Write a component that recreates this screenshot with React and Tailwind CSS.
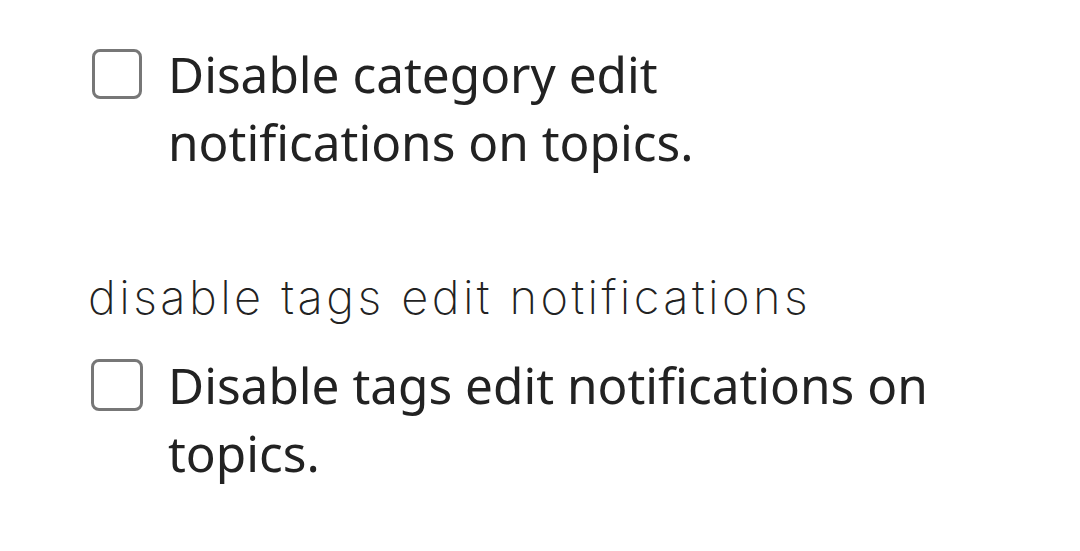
import React from 'react';

const Checkbox = ({ size = 'h-[50px] w-[50px]' }) => (
  <span className={`block shrink-0 rounded-[8px] border-[3.5px] border-[#777777] bg-white ${size}`} />
);

export default function App() {
  return (
    <div className="min-h-screen bg-white pt-[49px] text-[#222222]" style={{ fontFamily: '"Noto Sans", sans-serif' }}>
      {/* category edit notifications */}
      <label className="flex gap-[26px] pl-[92px]">
        <Checkbox />
        <span className="-mt-[9px] w-[780px] text-[49.5px] leading-[68px]">
          Disable category edit notifications on topics.
        </span>
      </label>

      {/* tags edit notifications */}
      <div className="mt-[91px]">
        <div className="pl-[88px] text-[47px] font-extralight leading-[60px] tracking-[3.4px] text-[#222222]" style={{ fontFamily: 'Inter, sans-serif' }}>
          disable tags edit notifications
        </div>
        <label className="mt-[32px] flex gap-[25px] pl-[91px]">
          <Checkbox size="h-[52px] w-[52px]" />
          <span className="-mt-[8px] w-[780px] text-[49.5px] leading-[68px]">
            Disable tags edit notifications on topics.
          </span>
        </label>
      </div>
    </div>
  );
}
